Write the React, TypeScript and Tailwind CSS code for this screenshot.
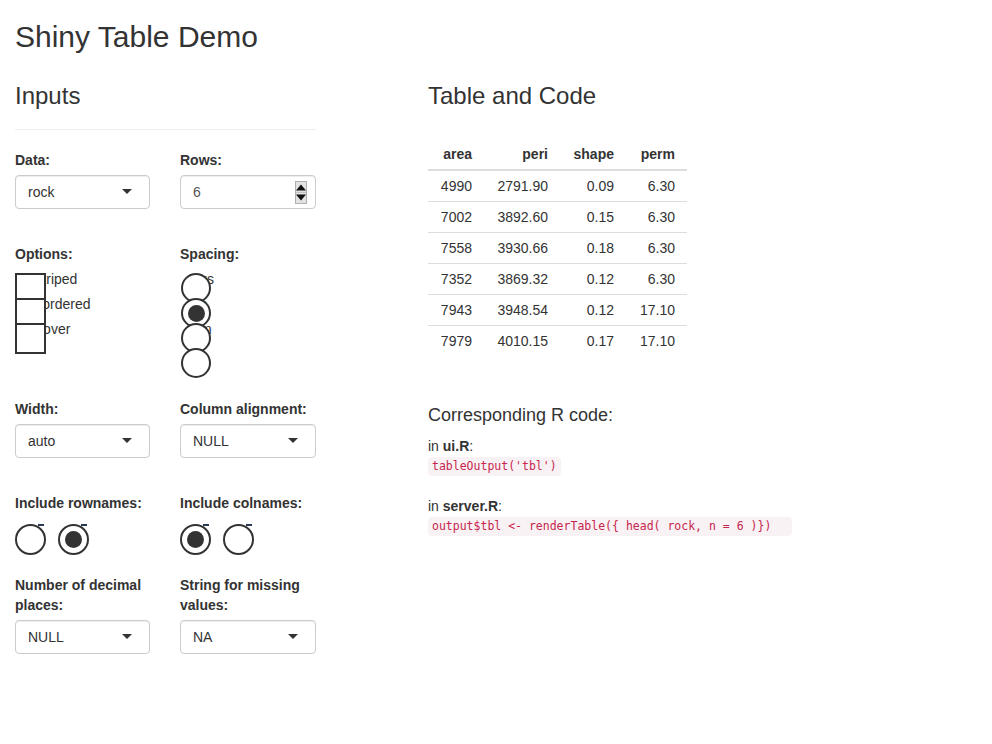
import React from 'react';

const rows = [
  ['4990', '2791.90', '0.09', '6.30'],
  ['7002', '3892.60', '0.15', '6.30'],
  ['7558', '3930.66', '0.18', '6.30'],
  ['7352', '3869.32', '0.12', '6.30'],
  ['7943', '3948.54', '0.12', '17.10'],
  ['7979', '4010.15', '0.17', '17.10'],
];

function Label({ children }: { children: React.ReactNode }) {
  return <div className="mb-[5px] font-bold leading-5">{children}</div>;
}

function Select({ value }: { value: string }) {
  return (
    <div className="flex h-[34px] w-full items-center justify-between rounded-[4px] border border-[#ccc] bg-white pl-3 pr-[17px] shadow-[inset_0_1px_1px_rgba(0,0,0,0.075)]">
      <span>{value}</span>
      <div className="mb-[1px] h-0 w-0 border-x-[5px] border-t-[5px] border-x-transparent border-t-[#333]" />
    </div>
  );
}

function NumberInput({ value }: { value: string }) {
  return (
    <div className="flex h-[34px] w-full items-center justify-between rounded-[4px] border border-[#ccc] bg-white pl-3 pr-2 text-[#555] shadow-[inset_0_1px_1px_rgba(0,0,0,0.075)]">
      <span>{value}</span>
      <svg width="12" height="23" viewBox="0 0 12 23">
        <rect x="0.5" y="0.5" width="11" height="22" fill="#e3e3e3" stroke="#b0b0b0" />
        <line x1="1" y1="11.5" x2="11" y2="11.5" stroke="#c4c4c4" />
        <path d="M1 9.5 L6 3.5 L11 9.5 Z" fill="#111" />
        <path d="M1 13.5 L6 19.5 L11 13.5 Z" fill="#111" />
      </svg>
    </div>
  );
}

// checkbox/radio boxes sit at their static place, pulled left over the label text
function CheckItem({ label }: { label: string }) {
  return (
    <div className="mb-[5px] h-5 pl-[18px] leading-5">
      <div className="absolute -ml-[18px] mt-1 h-[31px] w-[31px] border-2 border-[#333] bg-white" />
      {label}
    </div>
  );
}

function RadioItem({ label, checked }: { label: string; checked?: boolean }) {
  return (
    <div className="mb-[5px] h-5 pl-5 leading-5">
      <div className="absolute -ml-[19px] mt-1 flex h-[30px] w-[30px] items-center justify-center rounded-full border-2 border-[#333] bg-white">
        {checked && <div className="h-[17px] w-[17px] rounded-full bg-[#333]" />}
      </div>
      {label}
    </div>
  );
}

function InlineRadio({ checked }: { checked?: boolean }) {
  return (
    <div className="relative flex h-[31px] w-[31px] items-center justify-center rounded-full border-2 border-[#333] bg-white">
      {checked && <div className="h-[17px] w-[17px] rounded-full bg-[#333]" />}
      <span className="absolute -top-[2px] left-[21px] h-[1.5px] w-[6px] bg-[#2a3a55]" />
    </div>
  );
}

export default function App() {
  return (
    <div className="min-h-screen bg-white px-[15px] font-['Liberation_Sans',Arial,sans-serif] text-[14px] leading-5 text-[#333]">
      <h2 className="mb-[10px] mt-5 text-[30px] leading-[33px]">Shiny Table Demo</h2>

      <div className="flex">
        {/* Sidebar */}
        <div className="w-[301px]">
          <h3 className="mb-[10px] mt-5 text-[24px] leading-[26.4px]">Inputs</h3>
          <hr className="mb-5 mt-5 border-t border-[#eee]" />

          <div className="grid grid-cols-[135px_136px] gap-x-[30px]">
            <div>
              <Label>Data:</Label>
              <Select value="rock" />
            </div>
            <div>
              <Label>Rows:</Label>
              <NumberInput value="6" />
            </div>
          </div>

          <div className="relative mt-[35px] grid grid-cols-[135px_136px] gap-x-[30px]">
            <div>
              <Label>Options:</Label>
              <CheckItem label="Striped" />
              <CheckItem label="Bordered" />
              <CheckItem label="Hover" />
            </div>
            <div>
              <Label>Spacing:</Label>
              <RadioItem label="xs" />
              <RadioItem label="s" checked />
              <RadioItem label="m" />
              <RadioItem label="l" />
            </div>
          </div>

          <div className="mt-[30px] grid grid-cols-[135px_136px] gap-x-[30px]">
            <div>
              <Label>Width:</Label>
              <Select value="auto" />
            </div>
            <div>
              <Label>Column alignment:</Label>
              <Select value="NULL" />
            </div>
          </div>

          <div className="mt-[35px] grid grid-cols-[135px_136px] gap-x-[30px]">
            <div>
              <Label>Include rownames:</Label>
              <div className="flex h-[23px] gap-3 pt-[6px]">
                <InlineRadio />
                <InlineRadio checked />
              </div>
            </div>
            <div>
              <Label>Include colnames:</Label>
              <div className="flex h-[23px] gap-3 pt-[6px]">
                <InlineRadio checked />
                <InlineRadio />
              </div>
            </div>
          </div>

          <div className="mt-[34px] grid grid-cols-[135px_136px] gap-x-[30px]">
            <div>
              <Label>Number of decimal places:</Label>
              <Select value="NULL" />
            </div>
            <div>
              <Label>String for missing values:</Label>
              <Select value="NA" />
            </div>
          </div>
        </div>

        {/* Main panel */}
        <div className="ml-[112px]">
          <h3 className="mb-[10px] mt-5 text-[24px] leading-[26.4px]">Table and Code</h3>

          <table className="mt-[30px] border-collapse">
            <thead>
              <tr>
                <th className="w-[56px] border-b-2 border-[#ddd] px-3 py-[5px] text-right font-bold leading-5">area</th>
                <th className="w-[76px] border-b-2 border-[#ddd] px-3 py-[5px] text-right font-bold leading-5">peri</th>
                <th className="w-[66px] border-b-2 border-[#ddd] px-3 py-[5px] text-right font-bold leading-5">shape</th>
                <th className="w-[61px] border-b-2 border-[#ddd] px-3 py-[5px] text-right font-bold leading-5">perm</th>
              </tr>
            </thead>
            <tbody>
              {rows.map((r, i) => (
                <tr key={i} className={i > 0 ? 'border-t border-[#ddd]' : ''}>
                  {r.map((c, j) => (
                    <td key={j} className="px-3 py-[5px] text-right leading-5">
                      {c}
                    </td>
                  ))}
                </tr>
              ))}
            </tbody>
          </table>

          <h4 className="mb-[10px] mt-[50px] text-[18px] leading-[19.8px]">Corresponding R code:</h4>
          <div className="h-5">
            in <b>ui.R</b>:
          </div>
          <div className="flex h-5 items-center">
            <code className="h-[19px] rounded-[4px] bg-[#f9f2f4] px-1 font-['DejaVu_Sans_Mono',monospace] text-[11.5px] leading-[19px] text-[#c7254e]">
              tableOutput('tbl')
            </code>
          </div>
          <div className="h-5" />
          <div className="h-5">
            in <b>server.R</b>:
          </div>
          <div className="flex h-5 items-center">
            <code className="h-[19px] rounded-[4px] bg-[#f9f2f4] pl-1 pr-[21px] font-['DejaVu_Sans_Mono',monospace] text-[11.5px] leading-[19px] text-[#c7254e]">
              output$tbl &lt;- renderTable({'{'} head( rock, n = 6 ){'}'})
            </code>
          </div>
        </div>
      </div>
    </div>
  );
}
